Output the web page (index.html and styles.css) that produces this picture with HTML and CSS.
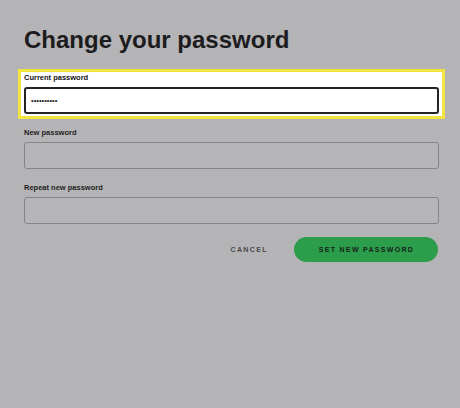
FILE: index.html
```html
<!DOCTYPE html>
<html>
<head>
<meta charset="utf-8">
<link rel="stylesheet" href="styles.css">
</head>
<body>
<main class="page">
  <h1 class="title">Change your password</h1>
  <form class="form">
    <div class="field field-focus">
      <label class="label" for="cur">Current password</label>
      <input class="input input-active" id="cur" type="password" value="secretpwd1">
    </div>
    <div class="field">
      <label class="label" for="new">New password</label>
      <input class="input" id="new" type="password">
    </div>
    <div class="field">
      <label class="label" for="rep">Repeat new password</label>
      <input class="input" id="rep" type="password">
    </div>
    <div class="actions">
      <button type="button" class="btn-cancel">Cancel</button>
      <button type="button" class="btn-primary">Set new password</button>
    </div>
  </form>
</main>
</body>
</html>
```
FILE: styles.css
```css
html, body {
  margin: 0;
  padding: 0;
  background: #b4b3b5;
  height: 100%;
}
body {
  font-family: "Liberation Sans", Arial, sans-serif;
  color: #1b1b1d;
}
.page {
  padding: 26px 21px 0 24px;
}
.title {
  margin: 0;
  font-size: 24px;
  line-height: 28px;
  font-weight: 700;
  color: #1c1c1e;
}
.form {
  display: flex;
  flex-direction: column;
}
.field {
  display: flex;
  flex-direction: column;
  margin-top: 14px;
}
.label {
  font-size: 7.5px;
  line-height: 10px;
  font-weight: 700;
  color: #1f1f21;
  margin-bottom: 4px;
}
.input {
  box-sizing: border-box;
  height: 27px;
  border: 1px solid #858486;
  border-radius: 3px;
  background: #b6b5b7;
  margin: 0;
  padding: 0 10px;
  font-family: "Liberation Sans", Arial, sans-serif;
  font-size: 8px;
  outline: none;
}
.field-focus {
  margin: 15px -6px -5px -6px;
  border: 3px solid #f1e53e;
  background: #ffffff;
  padding: 1px 3px 2px 3px;
}
.field-focus .label {
  color: #111;
}
.input-active {
  border: 2px solid #242424;
  background: #ffffff;
  color: #222;
  font-size: 7.5px;
  letter-spacing: 0;
  padding: 0 5px;
}
.actions {
  margin-top: 13px;
  display: flex;
  justify-content: flex-end;
  align-items: center;
  gap: 26px;
}
.btn-cancel {
  background: none;
  border: 0;
  padding: 0;
  font-family: "Liberation Sans", Arial, sans-serif;
  font-weight: 700;
  font-size: 7px;
  letter-spacing: 1.4px;
  text-transform: uppercase;
  color: #4a4a4c;
}
.btn-primary {
  width: 144px;
  height: 25px;
  border: 0;
  border-radius: 13px;
  background: #2b9d4b;
  font-family: "Liberation Sans", Arial, sans-serif;
  font-weight: 700;
  font-size: 7px;
  letter-spacing: 1.3px;
  text-transform: uppercase;
  color: #17231a;
  padding: 0 0 0 1px;
  margin-right: 1px;
}
```
